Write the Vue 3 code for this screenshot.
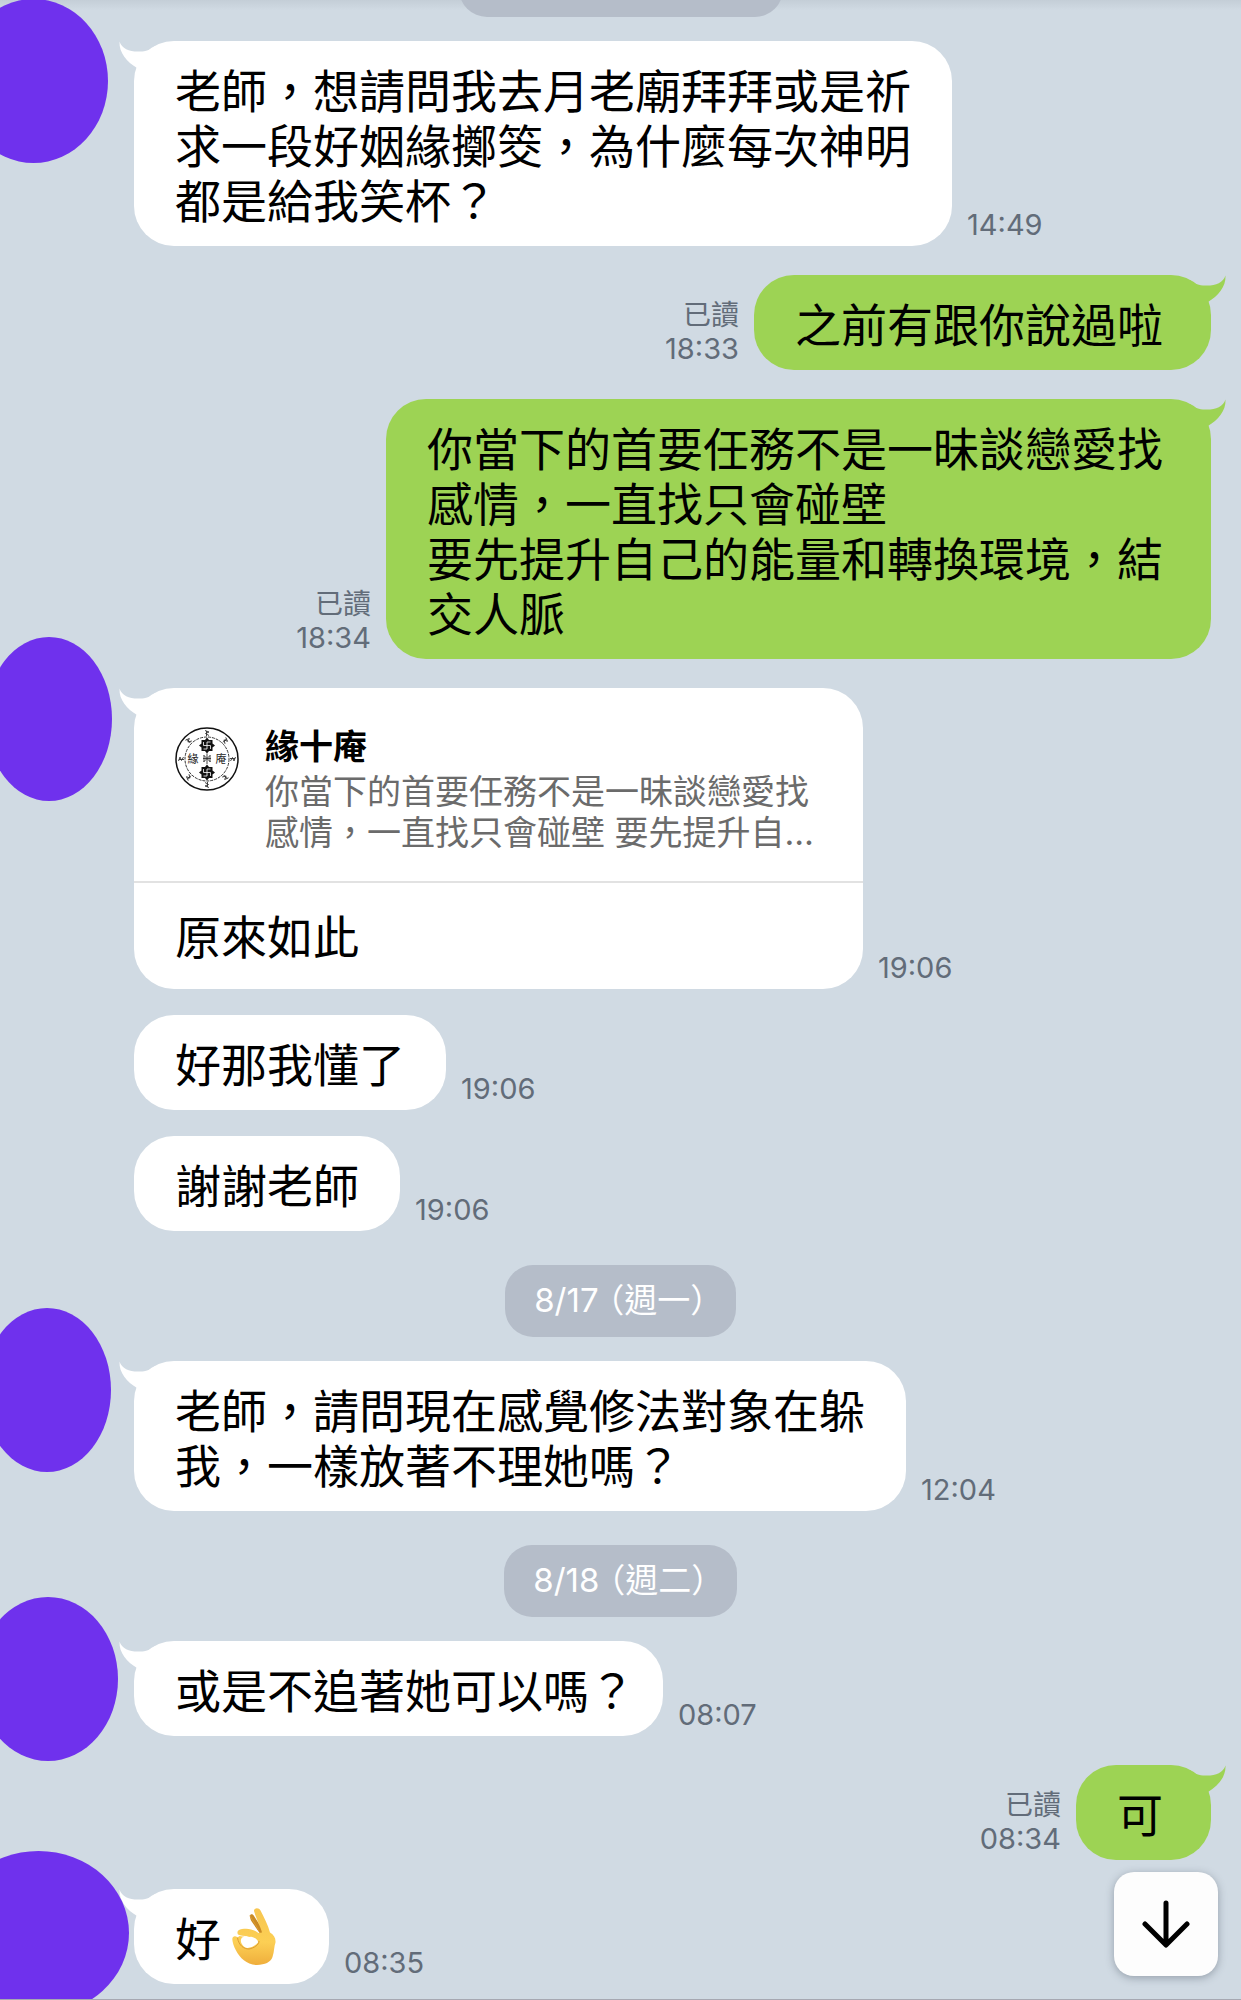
<script setup>
const entries = [
    { type: 'date', label: '', clipped: true },
    {
        type: 'received',
        text: '老師，想請問我去月老廟拜拜或是祈\n求一段好姻緣擲筊，為什麼每次神明\n都是給我笑杯？',
        time: '14:49',
        avatar: { left: -41, top: -42, width: 149 },
    },
    { type: 'sent', text: '之前有跟你說過啦', time: '18:33' },
    {
        type: 'sent',
        text: '你當下的首要任務不是一昧談戀愛找\n感情，一直找只會碰壁\n要先提升自己的能量和轉換環境，結\n交人脈',
        time: '18:34',
    },
    {
        type: 'received',
        text: '原來如此',
        time: '19:06',
        quote: {
            name: '緣十庵',
            text: '你當下的首要任務不是一昧談戀愛找\n感情，一直找只會碰壁 要先提升自…',
        },
        avatar: { left: -14, top: -51, width: 126 },
    },
    { type: 'received', text: '好那我懂了', time: '19:06', follows: true },
    { type: 'received', text: '謝謝老師', time: '19:06', follows: true },
    { type: 'date', label: '8/17 （週一）' },
    {
        type: 'received',
        text: '老師，請問現在感覺修法對象在躲\n我，一樣放著不理她嗎？',
        time: '12:04',
        avatar: { left: -17, top: -53, width: 128 },
    },
    { type: 'date', label: '8/18 （週二）' },
    {
        type: 'received',
        text: '或是不追著她可以嗎？',
        time: '08:07',
        trimmed: true,
        avatar: { left: -22, top: -44, width: 140 },
    },
    { type: 'sent', text: '可', time: '08:34' },
    {
        type: 'received',
        text: '好',
        emoji: true,
        time: '08:35',
        avatar: { left: -52, top: -38, width: 181 },
    },
];

const marks = [0, 45, 90, 135, 180, 225, 270, 315];

function avatarStyle(avatar) {
    return {
        left: `${avatar.left}px`,
        top: `${avatar.top}px`,
        width: `${avatar.width}px`,
    };
}

function scrollToEnd() {
    window.scrollTo({ top: document.body.scrollHeight, behavior: 'smooth' });
}
</script>

<template>
    <main class="chat" lang="zh-Hant">
        <template v-for="(entry, index) in entries" :key="index">
            <div v-if="entry.type === 'date'" class="date" :class="{ clipped: entry.clipped }">
                <span class="pill">{{ entry.label }}</span>
            </div>

            <article v-else class="row" :class="[entry.type, { follows: entry.follows }]">
                <span v-if="entry.avatar" class="avatar" :style="avatarStyle(entry.avatar)"></span>

                <div class="bubble" :class="{ trimmed: entry.trimmed }">
                    <svg v-if="!entry.follows" class="tail" viewBox="0 0 42 30" aria-hidden="true">
                        <path d="M.5 .5C3 8 11 11 21 10.500C27 10.500 31 9 36 5V30H17C17 29 17.500 28 18 27C8 21 0 12 .5 .5Z" />
                    </svg>

                    <div v-if="entry.quote" class="quote">
                        <svg class="seal" viewBox="0 0 64 64" aria-hidden="true">
                            <circle cx="32" cy="32" r="31" fill="none" stroke="#111" stroke-width="1.500" />
                            <circle
                                cx="32"
                                cy="32"
                                r="22"
                                fill="none"
                                stroke="#333"
                                stroke-width="1"
                                stroke-dasharray="3 1"
                            />
                            <path
                                v-for="angle in marks"
                                :key="angle"
                                :transform="`rotate(${angle} 32 32)`"
                                d="M30 3.500L34 5L30.500 6.500L34 8.500M31.500 4V9"
                                fill="none"
                                stroke="#333"
                                stroke-width=".9"
                            />
                            <g v-for="y in [18.5, 45.5]" :key="y" :transform="`translate(32 ${y})`">
                                <path
                                    d="M0-8L2-5.500H5.500V-2L8 0L5.500 2V5.500H2L0 8L-2 5.500H-5.500V2L-8 0L-5.500-2V-5.500H-2Z"
                                    fill="#111"
                                />
                                <path
                                    d="M0-3.500V3.500M-3.500 0H3.500M0-3.500H3.500M3.500 0V3.500M0 3.500H-3.500M-3.500 0V-3.500"
                                    fill="none"
                                    stroke="#fff"
                                    stroke-width=".8"
                                />
                            </g>
                            <path
                                d="M28.500 28L35.500 35M35.500 28L28.500 35M28 31.500H36M32 26.500V37M29 28.500V35M35 28.500V35"
                                fill="none"
                                stroke="#333"
                                stroke-width=".9"
                            />
                            <text x="18" y="36" text-anchor="middle">緣</text>
                            <text x="46" y="36" text-anchor="middle">庵</text>
                        </svg>
                        <div class="quote-body">
                            <strong>{{ entry.quote.name }}</strong>
                            <p>{{ entry.quote.text }}</p>
                        </div>
                    </div>

                    <p class="text">
                        <span>{{ entry.text }}</span>
                        <svg v-if="entry.emoji" class="emoji" viewBox="0 0 44 57" role="img" aria-label="OK">
                            <defs>
                                <linearGradient id="skin" x1="0" y1="0" x2="0" y2="1">
                                    <stop offset="0" stop-color="#f7c651" />
                                    <stop offset=".6" stop-color="#fccf54" />
                                    <stop offset="1" stop-color="#efae3c" />
                                </linearGradient>
                            </defs>
                            <path
                                d="M18 8C18 5.500 21 5.500 22 8L33 25L29 27L20 14C18.500 12 18 10 18 8Z"
                                fill="#c98a25"
                            />
                            <path
                                fill-rule="evenodd"
                                d="M22 3C22-.5 27-.8 28.500 2.500C32 9 36 17 38 24.500C42 27 43.800 30 43.500 34.500C42 38 42.500 43 40.500 49C38.500 54.500 33 56.500 25 57C15 57 8 50 4 42.500C1.500 38 .5 34 .3 31C.5 28 3.500 27.500 5.500 29.500L7.500 28C10 28.500 14 29 17.500 28.500C12 27.500 8 28 6 26.500C4.500 24 6 21.500 10 21C16 20 21 21 26.500 25L30 24.500C29.500 21 25 13 22 3ZM10 29.500C8 32 8.500 35.500 12.500 39C16 41.500 23 38.500 26 34.500C26.500 32 22 28 16 28.500C14 29 12 28.500 10 29.500Z"
                                fill="url(#skin)"
                            />
                            <path
                                d="M18 8C21 13 24 17 27 23M5.500 30C7 38 12 41 17 41C22 40 27 37 27 33.500"
                                fill="none"
                                stroke="#dc9d32"
                                stroke-width="1"
                                stroke-linecap="round"
                            />
                        </svg>
                    </p>
                </div>

                <div class="meta">
                    <span v-if="entry.type === 'sent'">已讀</span>
                    <time>{{ entry.time }}</time>
                </div>
            </article>
        </template>

        <button type="button" class="to-end" aria-label="捲動到最新訊息" @click="scrollToEnd">
            <svg viewBox="0 0 48 48" aria-hidden="true">
                <path d="M24 3V44M3 24L24 45L45 24" />
            </svg>
        </button>
    </main>
</template>

<style>
body {
    margin: 0;
    background: #d0dae3;
}
</style>

<style scoped>
.chat {
    position: relative;
    box-sizing: border-box;
    min-height: 100vh;
    padding-bottom: 14px;
    border-bottom: 1px solid #a6a8b2;
    overflow: hidden;
    background: linear-gradient(#c4ced7, #d0dae3 10px);
    font-family: "Noto Sans CJK TC", sans-serif;
    color: #000;
}

p {
    margin: 0;
}

.date {
    display: flex;
    justify-content: center;
    margin-top: 34px;
}

.pill {
    box-sizing: border-box;
    height: 72px;
    padding: 0 29px;
    border-radius: 28px;
    background: #b5bdc9;
    color: #fff;
    font-family: Inter, "Noto Sans CJK TC", sans-serif;
    font-size: 33px;
    font-feature-settings: "halt";
    line-height: 70px;
}

.date.clipped {
    margin-top: -55px;
}

.clipped .pill {
    width: 324px;
}

.row {
    position: relative;
    display: flex;
    align-items: flex-end;
    gap: 15px;
    margin-top: 29px;
    padding: 0 30px 0 134px;
}

.date + .row {
    margin-top: 24px;
}

.row.follows {
    margin-top: 26px;
}

.row.sent {
    flex-direction: row-reverse;
}

.avatar {
    position: absolute;
    z-index: 1;
    height: 164px;
    border-radius: 50%;
    background: #6f31ed;
}

.bubble {
    position: relative;
    border-radius: 40px;
    background: #fff;
}

.sent .bubble {
    background: #9dd354;
}

.tail {
    position: absolute;
    top: 0;
    left: -15px;
    width: 42px;
    height: 30px;
    fill: #fff;
}

.sent .tail {
    right: -15px;
    left: auto;
    transform: scaleX(-1);
    fill: #9dd354;
}

.text {
    display: flex;
    align-items: center;
    padding: 20px 41px;
    font-size: 46px;
    line-height: 55px;
    white-space: pre-line;
}

.sent .text {
    padding-right: 48px;
}

.trimmed .text {
    padding-right: 28px;
}

.emoji {
    width: 44px;
    height: 57px;
    margin: -1px 12px -1px 11px;
}

.quote {
    display: flex;
    gap: 26px;
    padding: 36px 49px 28px 41px;
    border-bottom: 2px solid #e2e2e2;
}

.quote + .text {
    padding: 24px 41px 27px;
}

.seal {
    flex: none;
    width: 64px;
    height: 64px;
    margin-top: 3px;
}

.seal text {
    font-size: 11px;
    fill: #222;
}

.quote-body strong {
    display: block;
    margin-bottom: 6px;
    font-size: 34px;
    font-weight: 700;
    line-height: 41px;
}

.quote-body p {
    color: #6b6b6b;
    font-family: Inter, "Noto Sans CJK TC", sans-serif;
    font-size: 34px;
    line-height: 41px;
    white-space: pre-line;
}

.meta {
    display: flex;
    flex-direction: column;
    margin-bottom: 4px;
    color: #626c79;
    font-family: Inter, "Noto Sans CJK TC", sans-serif;
    font-size: 28px;
    line-height: 34px;
}

.meta time {
    font-size: 29px;
}

.sent .meta {
    align-items: flex-end;
}

.to-end {
    position: absolute;
    right: 23px;
    bottom: 23px;
    z-index: 2;
    display: flex;
    align-items: center;
    justify-content: center;
    width: 104px;
    height: 104px;
    padding: 0;
    border: none;
    border-radius: 20px;
    background: #fdfdfd;
    box-shadow: 0 2px 8px rgba(60, 70, 85, 0.4);
    cursor: pointer;
}

.to-end svg {
    width: 48px;
    height: 48px;
    fill: none;
    stroke: #000;
    stroke-width: 5;
    stroke-linecap: round;
    stroke-linejoin: round;
}
</style>
